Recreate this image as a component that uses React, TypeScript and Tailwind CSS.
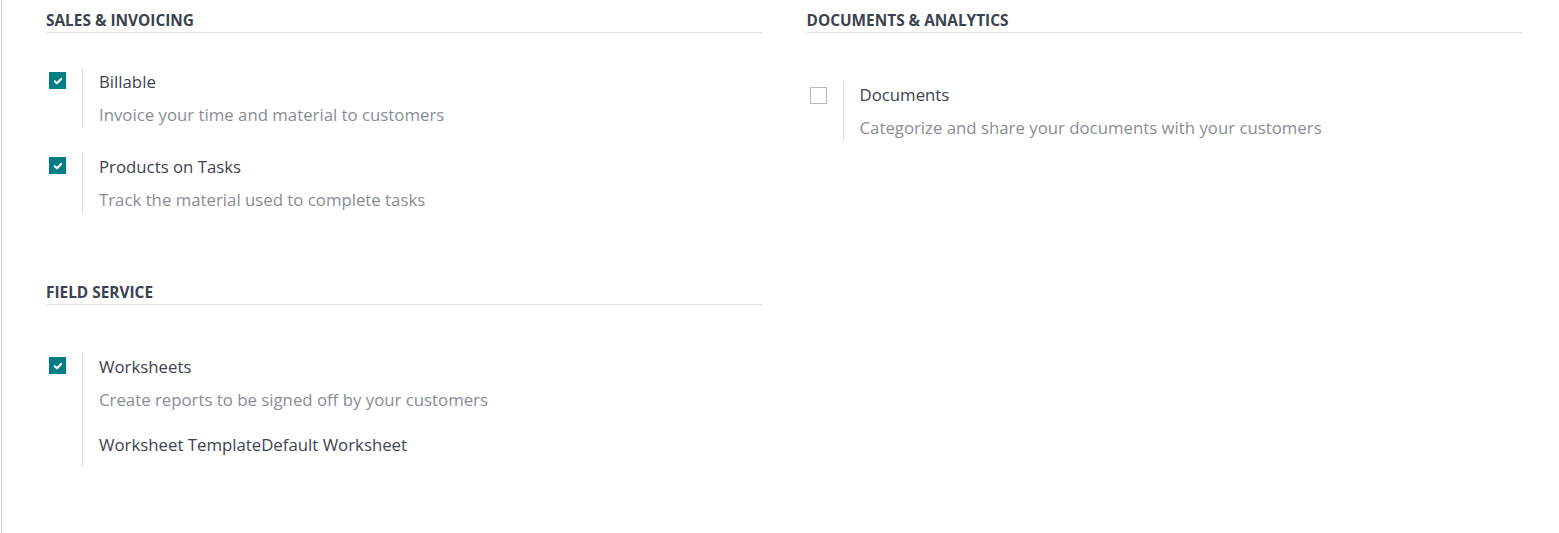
import React from 'react';

type Setting = {
  title: string;
  desc: string;
  checked: boolean;
  extra?: { label: string; value: string };
};

const font = { fontFamily: '"Open Sans", "Noto Sans", Arial, sans-serif' };

function Checkbox({ checked }: { checked: boolean }) {
  if (!checked) {
    return <div className="w-[17px] h-[17px] border border-[#b5b8bd] bg-white" />;
  }
  return (
    <div className="w-[17px] h-[17px] bg-[#017e84] flex items-center justify-center">
      <svg width="10" height="10" viewBox="0 0 10 10" fill="none">
        <path d="M1.8 5.2 L4 7.3 L8.2 2.9" stroke="white" strokeWidth="2.1" strokeLinecap="round" strokeLinejoin="round" />
      </svg>
    </div>
  );
}

function SettingRow({ item }: { item: Setting }) {
  return (
    <div className="flex items-stretch">
      <div className={`w-[36px] shrink-0 pl-[3px] ${item.checked ? 'pt-[4px]' : 'pt-[6px]'}`}>
        <Checkbox checked={item.checked} />
      </div>
      <div className="border-l border-[#d8dadd] pl-[16px] pt-[2px] pb-px">
        <div className="text-[16.8px] leading-[24px] text-[#3d4350]">{item.title}</div>
        <div className="mt-[9px] text-[16.8px] leading-[24px] text-[#8a8d95]">{item.desc}</div>
        {item.extra && (
          <div className="mt-[21px] mb-[9px] text-[16.8px] leading-[24px] text-[#3d4350]">
            <span>{item.extra.label}</span>
            <span>{item.extra.value}</span>
          </div>
        )}
      </div>
    </div>
  );
}

function SectionHeader({ label }: { label: string }) {
  return (
    <div className="pt-[11px] pb-[1px] border-b border-[#e2e3e5]">
      <h3 className="text-[15.4px] leading-[20px] font-bold uppercase text-[#3b4250]">{label}</h3>
    </div>
  );
}

const sales: Setting[] = [
  { title: 'Billable', desc: 'Invoice your time and material to customers', checked: true },
  { title: 'Products on Tasks', desc: 'Track the material used to complete tasks', checked: true },
];

const fieldService: Setting[] = [
  {
    title: 'Worksheets',
    desc: 'Create reports to be signed off by your customers',
    checked: true,
    extra: { label: 'Worksheet Template', value: 'Default Worksheet' },
  },
];

const documents: Setting[] = [
  { title: 'Documents', desc: 'Categorize and share your documents with your customers', checked: false },
];

export default function App() {
  return (
    <div className="h-[533px] bg-white ml-px border-l border-[#d4d4d8] overflow-hidden" style={font}>
      <div className="pl-[44px] pr-[36px] grid grid-cols-2 gap-x-[44px]">
        <div>
          <section>
            <SectionHeader label="Sales & Invoicing" />
            <div className="mt-[35px] flex flex-col gap-[25px]">
              {sales.map((s) => (
                <SettingRow key={s.title} item={s} />
              ))}
            </div>
          </section>
          <section className="mt-[59px]">
            <SectionHeader label="Field Service" />
            <div className="mt-[48px] flex flex-col gap-[25px]">
              {fieldService.map((s) => (
                <SettingRow key={s.title} item={s} />
              ))}
            </div>
          </section>
        </div>
        <div>
          <section>
            <SectionHeader label="Documents & Analytics" />
            <div className="mt-[48px] flex flex-col gap-[25px]">
              {documents.map((s) => (
                <SettingRow key={s.title} item={s} />
              ))}
            </div>
          </section>
        </div>
      </div>
    </div>
  );
}
